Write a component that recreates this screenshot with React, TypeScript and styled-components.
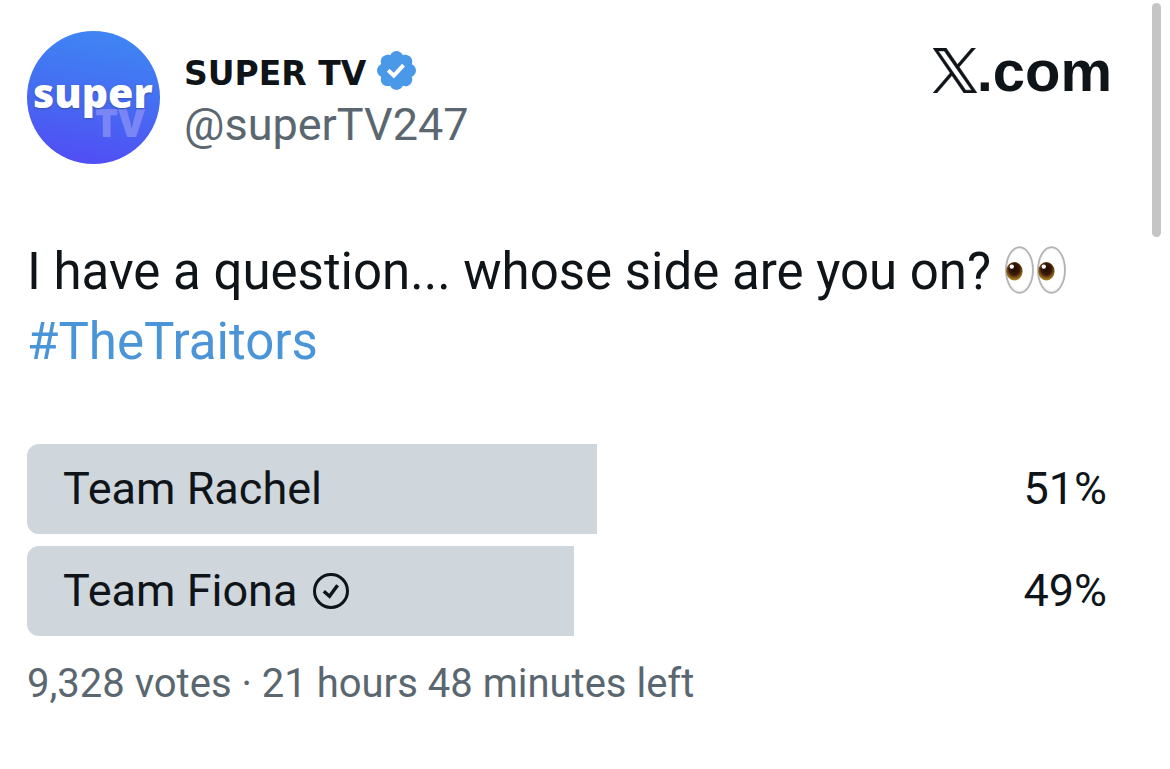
import React from 'react';
import styled, { createGlobalStyle } from 'styled-components';

const GlobalStyle = createGlobalStyle`
  *, *::before, *::after { box-sizing: border-box; }
  body {
    margin: 0;
    background: #ffffff;
    color: #0f1419;
    font-family: Roboto, "Liberation Sans", sans-serif;
  }
`;

const Page = styled.main`
  padding: 31px 26px 40px 27px;
`;

const ScrollThumb = styled.div`
  position: absolute;
  top: 3px;
  right: 9px;
  width: 9px;
  height: 234px;
  border-radius: 5px;
  background: #c5c5c5;
`;

const Header = styled.header`
  display: flex;
  align-items: flex-start;
  gap: 24px;
`;

const Avatar = styled.div`
  position: relative;
  flex: none;
  width: 133px;
  height: 133px;
  border-radius: 50%;
  overflow: hidden;
  background: linear-gradient(190deg, #3f86f4 5%, #4470f2 45%, #5050f4 90%);
  font-family: "Open Sans", sans-serif;
  font-weight: 800;
`;

const AvatarWord = styled.span`
  position: absolute;
  z-index: 1;
  left: 6px;
  top: 39px;
  font-size: 41px;
  line-height: 44px;
  color: #ffffff;
  text-shadow: 0 1px 2px #3c50a8;
`;

const AvatarTag = styled.span`
  position: absolute;
  left: 68px;
  top: 71px;
  font-size: 39px;
  line-height: 40px;
  color: #7a86f6;
`;

const Identity = styled.div`
  display: flex;
  flex-direction: column;
  align-items: flex-start;
  flex: 1;
  padding-top: 18px;
`;

const NameRow = styled.div`
  display: flex;
  align-items: center;
  gap: 11px;
  height: 42px;
`;

const Name = styled.h1`
  margin: 0;
  padding-top: 8px;
  font-family: "DejaVu Sans", sans-serif;
  font-size: 33px;
  line-height: 42px;
  font-weight: 700;
`;

const Handle = styled.a`
  padding-top: 6px;
  font-size: 45px;
  line-height: 56px;
  color: #5b6770;
  text-decoration: none;
`;

const Brand = styled.a`
  display: flex;
  align-items: flex-end;
  height: 62px;
  margin-right: 32px;
  color: #0f1419;
  text-decoration: none;
`;

const BrandText = styled.span`
  font-family: "Liberation Sans", Arial, sans-serif;
  font-size: 58px;
  line-height: 44px;
  font-weight: 700;
`;

const Message = styled.p`
  margin: 73px 0 0;
  font-size: 51px;
  line-height: 70px;
`;

const Hashtag = styled.a`
  display: block;
  color: #4a94d8;
  text-decoration: none;
`;

const Poll = styled.ul`
  display: flex;
  flex-direction: column;
  gap: 12px;
  margin: 67px 0 0;
  padding: 0;
  list-style: none;
`;

const Choice = styled.li`
  display: grid;
  align-items: center;
  height: 90px;
  font-size: 45px;
  line-height: 60px;
`;

const Bar = styled.div`
  grid-area: 1 / 1;
  height: 100%;
  border-radius: 12px 0 0 12px;
  background: #cfd6dc;
`;

const ChoiceText = styled.div`
  grid-area: 1 / 1;
  display: flex;
  align-items: center;
  gap: 16px;
  padding: 0 37px 0 36px;
`;

const Percent = styled.span`
  margin-left: auto;
`;

const Meta = styled.p`
  margin: 22px 0 0;
  font-size: 40px;
  line-height: 52px;
  color: #5b6770;
`;

const VerifiedBadge = () => (
  <svg width="39" height="39" viewBox="1.6 1.6 18.8 18.8" role="img" aria-label="Verified account">
    <path
      fill="#4a99e9"
      d="M20.396 11c-.018-.646-.215-1.275-.57-1.816-.354-.54-.852-.972-1.438-1.246.223-.607.27-1.264.14-1.897-.131-.634-.437-1.218-.882-1.687-.47-.445-1.053-.75-1.687-.882-.633-.13-1.29-.083-1.897.14-.273-.587-.704-1.086-1.245-1.44S11.647 1.62 11 1.604c-.646.017-1.273.213-1.813.568s-.969.854-1.24 1.44c-.608-.223-1.267-.272-1.902-.14-.635.13-1.22.436-1.69.882-.445.47-.749 1.055-.878 1.688-.13.633-.08 1.29.144 1.896-.587.274-1.087.705-1.443 1.245-.356.54-.555 1.17-.574 1.817.02.647.218 1.276.574 1.817.356.54.856.972 1.443 1.245-.224.606-.274 1.263-.144 1.896.13.634.433 1.218.877 1.688.47.443 1.054.747 1.687.878.633.132 1.29.084 1.897-.136.274.586.705 1.084 1.246 1.439.54.354 1.17.551 1.816.569.647-.016 1.276-.213 1.817-.567s.972-.854 1.245-1.44c.604.239 1.266.296 1.903.164.636-.132 1.22-.447 1.68-.907.46-.46.776-1.044.908-1.681s.075-1.299-.165-1.903c.586-.274 1.084-.705 1.439-1.246.354-.54.551-1.17.569-1.816z"
    />
    <path fill="none" stroke="#ffffff" strokeWidth="1.9" d="M7 10.900l2.700 2.600 4.700-5.100" />
  </svg>
);

const XLogo = () => (
  <svg width="44" height="45" viewBox="0 0 1200 1227" aria-hidden="true">
    <path
      fill="currentColor"
      stroke="currentColor"
      strokeWidth="14"
      d="M714.163 519.284L1160.89 0H1055.03L667.137 450.887L357.328 0H0L468.492 681.821L0 1226.37H105.866L515.491 750.218L842.672 1226.37H1200L714.137 519.284H714.163ZM569.165 687.828L521.697 619.934L144.011 79.6944H306.615L611.412 515.685L658.88 583.579L1055.08 1150.3H892.476L569.165 687.854V687.828Z"
    />
  </svg>
);

const EyesSvg = styled.svg`
  vertical-align: -5px;
`;

const Eyes = () => (
  <EyesSvg width="62" height="48" viewBox="0 0 62 48" role="img" aria-label="Eyes">
    <defs>
      <radialGradient id="iris" cx="50%" cy="38%" r="62%">
        <stop offset="0" stopColor="#220a03" />
        <stop offset="0.5" stopColor="#3a1807" />
        <stop offset="0.75" stopColor="#7d5414" />
        <stop offset="1" stopColor="#b08a2c" />
      </radialGradient>
      <radialGradient id="white" cx="50%" cy="50%" r="50%">
        <stop offset="0.85" stopColor="#ffffff" />
        <stop offset="1" stopColor="#eaeaea" />
      </radialGradient>
    </defs>
    {[0, 32].map((x) => (
      <g key={x} transform={`translate(${x} 0)`}>
        <ellipse cx="15.500" cy="24" rx="13.500" ry="22.800" fill="url(#white)" stroke="#b4b4b4" strokeWidth="1.800" />
        <ellipse cx="10.400" cy="25.300" rx="8.200" ry="9.200" fill="url(#iris)" />
        <circle cx="7.800" cy="20.600" r="2.200" fill="#ffffff" />
      </g>
    ))}
  </EyesSvg>
);

const ChosenMark = () => (
  <svg width="36" height="36" viewBox="0 0 36 36" role="img" aria-label="Your vote">
    <g fill="none" stroke="currentColor" strokeWidth="3">
      <circle cx="18" cy="18" r="16.500" />
      <path strokeWidth="3.500" d="M10.800 18.300l5.700 5L24.600 12.300" />
    </g>
  </svg>
);

const choices = [
  { label: 'Team Rachel', share: 51, chosen: false },
  { label: 'Team Fiona', share: 49, chosen: true },
];

export default function App() {
  return (
    <>
      <GlobalStyle />
      <Page>
        <Header>
          <Avatar>
            <AvatarWord>super</AvatarWord>
            <AvatarTag>TV</AvatarTag>
          </Avatar>
          <Identity>
            <NameRow>
              <Name>SUPER TV</Name>
              <VerifiedBadge />
            </NameRow>
            <Handle href="#superTV247">@superTV247</Handle>
          </Identity>
          <Brand href="#home">
            <XLogo />
            <BrandText>.com</BrandText>
          </Brand>
        </Header>
        <Message>
          I have a question... whose side are you on? <Eyes />
          <Hashtag href="#TheTraitors">#TheTraitors</Hashtag>
        </Message>
        <Poll>
          {choices.map(({ label, share, chosen }) => (
            <Choice key={label}>
              <Bar style={{ width: `${share}%` }} />
              <ChoiceText>
                <span>{label}</span>
                {chosen && <ChosenMark />}
                <Percent>{share}%</Percent>
              </ChoiceText>
            </Choice>
          ))}
        </Poll>
        <Meta>9,328 votes · 21 hours 48 minutes left</Meta>
      </Page>
      <ScrollThumb />
    </>
  );
}
